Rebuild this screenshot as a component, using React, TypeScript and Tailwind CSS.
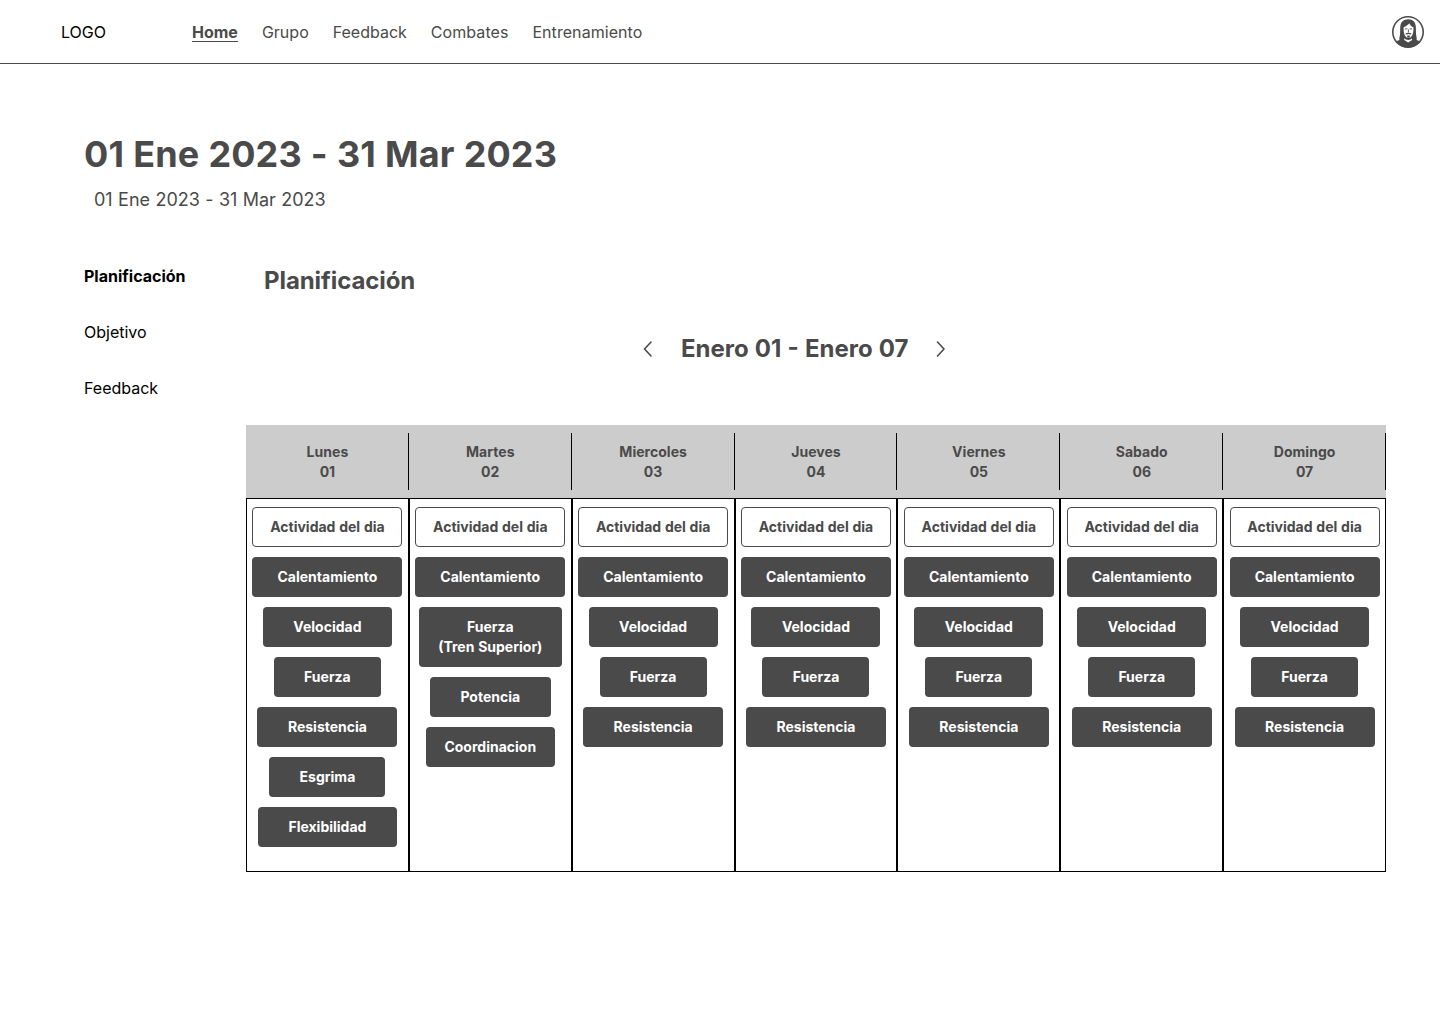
type Activity = { label: string; size: string };

const calentamiento: Activity = { label: "Calentamiento", size: "w-[150px]" };
const velocidad: Activity = { label: "Velocidad", size: "w-[129px]" };
const fuerza: Activity = { label: "Fuerza", size: "w-[107px]" };
const resistencia: Activity = { label: "Resistencia", size: "w-[140px]" };

const base = [calentamiento, velocidad, fuerza, resistencia];

const days: { name: string; date: string; items: Activity[] }[] = [
  {
    name: "Lunes",
    date: "01",
    items: [
      ...base,
      { label: "Esgrima", size: "w-[116px]" },
      { label: "Flexibilidad", size: "w-[139px]" },
    ],
  },
  {
    name: "Martes",
    date: "02",
    items: [
      calentamiento,
      { label: "Fuerza\n(Tren Superior)", size: "w-[143px]" },
      { label: "Potencia", size: "w-[121px]" },
      { label: "Coordinacion", size: "w-[129px]" },
    ],
  },
  { name: "Miercoles", date: "03", items: base },
  { name: "Jueves", date: "04", items: base },
  { name: "Viernes", date: "05", items: base },
  { name: "Sabado", date: "06", items: base },
  { name: "Domingo", date: "07", items: base },
];

function Avatar() {
  return (
    <svg viewBox="0 0 32 32" className="size-8" aria-label="Perfil">
      <circle cx="16" cy="16" r="15.2" fill="#fff" stroke="#4a4a4a" strokeWidth="1.6" />
      <path
        fill="#4a4a4a"
        d="M16.200 3.200c-5 0-7.500 2.800-7.900 7.400-.3 3.800.1 6.600-.5 9.400-.3 1.500-.6 2.600-.3 4-1.400.4-2.700 1-3.800 1.900A15.200 15.200 0 0 0 16 31.200a15.200 15.200 0 0 0 12.300-5.300c-1.100-.9-2.300-1.500-3.700-1.900.3-1.400 0-2.500-.3-4-.6-2.800-.2-5.600-.5-9.400-.4-4.600-2.600-7.400-7.600-7.400Z"
      />
      <path
        fill="#fff"
        d="M17.400 7.300c-1.500 1.900-3.500 3-5.700 4-.2 3.300 0 6 1.100 8 .8 1.400 2.200 2.800 3.700 2.800s2.900-1.400 3.700-2.800c1.100-2 1.400-4.700 1.200-8-1.900-.6-3.200-1.800-4-4Z"
      />
      <path
        fill="#fff"
        d="M12.400 22.300c1 1 2.400 1.600 3.900 1.600s2.700-.6 3.600-1.600l.2 1.700-3.900 2.600-4-2.600Z"
      />
      <path
        fill="none"
        stroke="#4a4a4a"
        strokeWidth="0.9"
        strokeLinecap="round"
        d="M13.300 12.900h1.700M18 12.900h1.700M16.400 13.800v2.300"
      />
      <path
        fill="#4a4a4a"
        d="M13.700 17.300c1.700-.9 3.800-.9 5.500 0v1.300h-.8c-1-.7-2.800-.7-3.800 0h-.9ZM15.200 19.600h2.600v1.800c-.8.600-1.800.6-2.600 0Z"
      />
    </svg>
  );
}

function Chevron({ d }: { d: string }) {
  return (
    <svg viewBox="0 0 10 18" className="h-[18px] w-[10px]" fill="none" stroke="#4a4a4a" strokeWidth="1.6" strokeLinecap="round" strokeLinejoin="round">
      <path d={d} />
    </svg>
  );
}

export default function App() {
  return (
    <div className="min-h-[1024px] w-[1440px] bg-white font-['Inter',sans-serif] text-[#4a4a4a] [word-spacing:0.028em]">
      <header className="flex h-16 items-center border-b border-[#4a4a4a] pl-[61px] pr-4">
        <span className="w-[131px] text-base text-black">LOGO</span>
        <nav className="flex items-center gap-6 text-base">
          <a className="font-bold underline decoration-1 underline-offset-[3px]">Home</a>
          <a>Grupo</a>
          <a>Feedback</a>
          <a className="tracking-[0.06px]">Combates</a>
          <a className="tracking-[0.06px]">Entrenamiento</a>
        </nav>
        <div className="ml-auto">
          <Avatar />
        </div>
      </header>

      <div className="pl-[84px] pt-[68px]">
        <h1 className="text-[36px] font-bold leading-[44px] tracking-[0.13px]">01 Ene 2023 - 31 Mar 2023</h1>
        <p className="mt-[13px] pl-[10px] text-lg leading-[22px] tracking-[-0.03px]">01 Ene 2023 - 31 Mar 2023</p>
      </div>

      <div className="mt-[54px] flex pl-[84px]">
        <aside className="-mt-px flex w-[162px] flex-col gap-8 text-base leading-6 text-black">
          <a className="font-bold">Planificación</a>
          <a>Objetivo</a>
          <a>Feedback</a>
        </aside>

        <main className="w-[1140px]">
          <h2 className="pl-[18px] text-2xl font-bold leading-8 tracking-[-0.08px] text-[#4a4a4a]">Planificación</h2>
          <div className="mt-9 flex h-8 items-center pl-[397px]">
            <Chevron d="M8 2L1.500 9 8 16" />
            <span className="ml-[28px] w-[228px] whitespace-nowrap text-2xl font-bold">Enero 01 - Enero 07</span>
            <span className="ml-[26px]">
              <Chevron d="M2.500 2L9 9l-6.500 7" />
            </span>
          </div>

          <div className="mt-[60px] grid grid-cols-7 text-center text-sm font-bold leading-5">
            {days.map((day) => (
              <section key={day.date} className="flex flex-col">
                <div className="flex h-[73px] bg-[#ccc] py-2">
                  <div className="flex-1 border-r border-black pl-px pt-[9px] tracking-[0.03px]">
                    <p>{day.name}</p>
                    <p>{day.date}</p>
                  </div>
                </div>
                <div className="flex h-[374px] flex-col items-center gap-[10px] border border-black pt-2">
                  <div className="flex h-10 w-[150px] shrink-0 items-center justify-center rounded border border-[#4a4a4a] bg-white">
                    Actividad del dia
                  </div>
                  {day.items.map((item) => (
                    <div
                      key={item.label}
                      className={`${item.size} shrink-0 whitespace-pre-line rounded bg-[#4a4a4a] py-[10px] text-white`}
                    >
                      {item.label}
                    </div>
                  ))}
                </div>
              </section>
            ))}
          </div>
        </main>
      </div>
    </div>
  );
}
